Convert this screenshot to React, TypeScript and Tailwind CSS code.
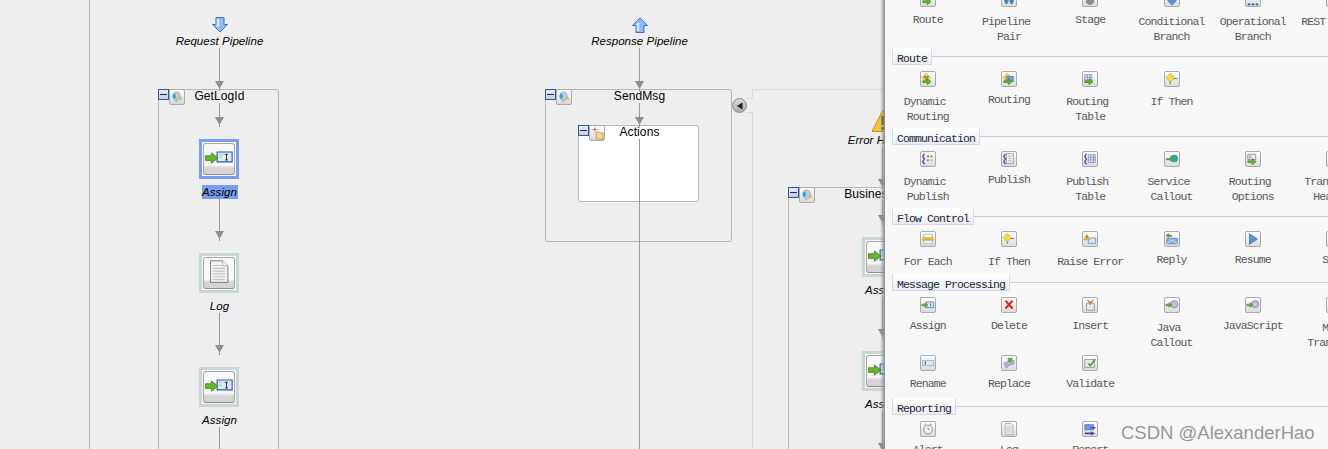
import type { ReactNode } from "react";

// ---- small pieces shared by the palette icons ----

const GreenArrow = () => (
  <path d="M2 10h5V7.5l4.5 3.5L7 14.5V12H2z" fill="#62b32f" stroke="#3f7d1e" strokeWidth="0.7" />
);
const Diamond = () => (
  <path d="M6 1.5 11 6.5 6 11.5 1 6.5z" fill="#f7d84a" stroke="#c9a227" strokeWidth="0.7" />
);
const PurpleZig = () => (
  <path d="M4 2 2 5l2 3-2 3 2 3" fill="none" stroke="#6a4aa8" strokeWidth="1.6" />
);
const Grid = ({ x = 6 }: { x?: number }) => (
  <path
    d={`M${x} 3h8v9h-8zM${x} 6h8M${x} 9h8M${x + 3} 3v9M${x + 6} 3v9`}
    fill="#eef2fa"
    stroke="#5a6ea8"
    strokeWidth="0.7"
  />
);
const Gear = () => (
  <>
    <circle cx="10.5" cy="7" r="4" fill="#cfc6e6" stroke="#7a66ac" strokeWidth="0.9" />
    <circle cx="10.5" cy="7" r="1.4" fill="#fff" stroke="#7a66ac" strokeWidth="0.6" />
  </>
);

const ICONS: Record<string, ReactNode> = {
  route: <GreenArrow />,
  pair: <path d="M3 6h4v5l-2 3-2-3zM9 6h4v5l-2 3-2-3z" fill="#4d82cf" stroke="#2c5aa0" strokeWidth="0.6" />,
  stage: <path d="M4 8h8v4l-2 2H6l-2-2z" fill="#8d8d8d" stroke="#666" strokeWidth="0.6" />,
  cond: <path d="M8 15 3 10l5-5 5 5z" fill="#5b8fdc" stroke="#2c5aa0" strokeWidth="0.6" />,
  oper: <path d="M2 13h3v2H2zM6.5 13h3v2h-3zM11 13h3v2h-3z" fill="#2c5aa0" />,
  rest: <path d="M4 9h8v5H4z" fill="#999" />,
  dynRoute: (
    <>
      <Diamond />
      <circle cx="4.5" cy="5.5" r="1.3" fill="#d64a2f" />
      <circle cx="7.5" cy="5.5" r="1.3" fill="#4d7fd0" />
      <circle cx="6" cy="8" r="1.3" fill="#58a030" />
      <GreenArrow />
    </>
  ),
  routing: (
    <>
      <Diamond />
      <path d="M5 5h8v6H5z" fill="#6d9be0" stroke="#3a62a8" strokeWidth="0.6" />
      <GreenArrow />
    </>
  ),
  routeTable: (
    <>
      <Grid x={2} />
      <GreenArrow />
    </>
  ),
  ifThen: (
    <>
      <path d="M6 7.5v6M6 7.5h8" stroke="#4d72b8" strokeWidth="1.1" />
      <Diamond />
    </>
  ),
  dynPub: (
    <>
      <PurpleZig />
      <circle cx="8" cy="5" r="1.2" fill="#d64a2f" />
      <circle cx="12" cy="5" r="1.2" fill="#58a030" />
      <circle cx="8" cy="9.5" r="1.2" fill="#4d7fd0" />
      <circle cx="12" cy="9.5" r="1.2" fill="#e0b030" />
    </>
  ),
  publish: (
    <>
      <path d="M5 2h8v11H5z" fill="#f1f1f6" stroke="#777" strokeWidth="0.7" />
      <path d="M7 5h4M7 7.5h4M7 10h4" stroke="#999" strokeWidth="0.7" />
      <PurpleZig />
    </>
  ),
  pubTable: (
    <>
      <Grid />
      <PurpleZig />
    </>
  ),
  callout: (
    <>
      <circle cx="10.5" cy="7.5" r="4" fill="#38a6a6" stroke="#1f7a84" strokeWidth="0.6" />
      <path d="M1.5 7.5h4.5V5.5l3 2.5-3 2.5V9H1.5z" fill="#62b32f" stroke="#3f7d1e" strokeWidth="0.5" />
    </>
  ),
  options: (
    <>
      <path d="M2 2.5h9v6H2z" fill="#eee" stroke="#666" strokeWidth="0.7" />
      <path d="M3.5 4.5h2M3.5 6.5h2" stroke="#555" strokeWidth="0.8" />
      <GreenArrow />
    </>
  ),
  transport: <path d="M3 3h10v10H3z" fill="#ddd" stroke="#888" strokeWidth="0.6" />,
  forEach: (
    <>
      <path d="M3 2.5h10v11H3z" fill="#f4f4f4" stroke="#999" strokeWidth="0.7" />
      <path d="M2 6.5h12v3H2z" fill="#e8b83a" stroke="#b08820" strokeWidth="0.5" />
    </>
  ),
  raise: (
    <>
      <path d="M6 7h8.5v6H6z" fill="#dbe8f5" stroke="#3a6ea8" strokeWidth="0.7" />
      <path d="M4.5 2.5 8 9H1z" fill="#f2c530" stroke="#a88418" strokeWidth="0.5" />
      <path d="M4.5 4.5v2.5" stroke="#222" strokeWidth="0.9" />
    </>
  ),
  reply: (
    <>
      <path d="M2 7h12v6.5H2z" fill="#8db2e8" stroke="#4a72b4" strokeWidth="0.7" />
      <path d="M2 13.5 8 9l6 4.5" fill="none" stroke="#e4eefb" strokeWidth="0.8" />
      <path d="M7.5 3.5H4V1.8L1 4l3 2.2V5h3.5z" fill="#62b32f" stroke="#3f7d1e" strokeWidth="0.5" />
    </>
  ),
  resume: <path d="M4 2l9 6-9 6z" fill="#5d8fe0" stroke="#2c5aa0" strokeWidth="0.7" />,
  skip: <path d="M3 4l5 4-5 4zM8 4l5 4-5 4z" fill="#aaa" stroke="#777" strokeWidth="0.5" />,
  assign: (
    <>
      <path d="M6 4.5h8.5v6.5H6z" fill="#dbe8f5" stroke="#2c68a8" strokeWidth="0.8" />
      <path d="M11 6v3.5" stroke="#222" strokeWidth="0.7" />
      <path d="M1 7h3.5V5.2L8 8l-3.5 2.8V9H1z" fill="#62b32f" stroke="#3f7d1e" strokeWidth="0.5" />
    </>
  ),
  del: <path d="M4 3l8 9M12 3l-8 9" stroke="#d8261c" strokeWidth="2.4" />,
  insert: (
    <>
      <path d="M4 6h9v8H4z" fill="#e8e8f2" stroke="#777" strokeWidth="0.7" />
      <path d="M5 2l3.5 2.5L12 2l-3.5 6z" fill="#e08a3a" stroke="#a85f1c" strokeWidth="0.5" />
    </>
  ),
  java: (
    <>
      <Gear />
      <path d="M1 7h3.5V5.2L8 8l-3.5 2.8V9H1z" fill="#62b32f" stroke="#3f7d1e" strokeWidth="0.5" />
    </>
  ),
  mfl: <path d="M3 3h10v10H3z" fill="#e4e0f0" stroke="#8a80b0" strokeWidth="0.6" />,
  rename: (
    <>
      <path d="M1.5 5h13v6h-13z" fill="#dbe8f5" stroke="#7d8fae" strokeWidth="0.7" />
      <path d="M5 6v4" stroke="#222" strokeWidth="0.8" />
    </>
  ),
  replace: (
    <>
      <path d="M2 8l6-2 6-1v4l-6 2-3 3z" fill="#b4aed2" stroke="#7a70a4" strokeWidth="0.5" />
      <path d="M12 2l-1.5 5-4-1.5 1.8-1-1.8-1.5 2.5-1 1 1z" fill="#62b32f" stroke="#3f7d1e" strokeWidth="0.5" />
    </>
  ),
  validate: (
    <>
      <path d="M2 4h11v9H2z" fill="#e7e7ee" stroke="#777" strokeWidth="0.7" />
      <path d="M6 8.5l2.5 2.5L14 3.5" fill="none" stroke="#4e9a25" strokeWidth="1.8" />
    </>
  ),
  alert: (
    <>
      <circle cx="8" cy="8.5" r="5" fill="#f4f4fa" stroke="#6d7ea8" strokeWidth="1" />
      <path d="M8 5.5v3h2.5" fill="none" stroke="#6d7ea8" strokeWidth="0.8" />
      <path d="M3.5 3.5 5.5 2M12.5 3.5 10.5 2" stroke="#e0a030" strokeWidth="1.2" />
    </>
  ),
  log: (
    <>
      <path d="M3.5 1.5h6.5l2.5 2.5v10.5h-9z" fill="#eee" stroke="#888" strokeWidth="0.7" />
      <path d="M5 5.5h6M5 7.5h6M5 9.5h6M5 11.5h6" stroke="#bbb" strokeWidth="0.8" />
    </>
  ),
  report: (
    <>
      <path d="M2 3h10v6H2z" fill="#6d9be0" stroke="#3a62a8" strokeWidth="0.7" />
      <path d="M2 12h7V10.5l5 2.5-5 2.5V14H2zM8 6h4V5l3 1.5L12 8V7H8z" fill="#5c3f9c" />
    </>
  ),
};

// ---- palette data ----

type Item = { icon: string; lines: string[]; lo?: boolean };
type Row = { h: string; items: Item[] };
type Section = { title?: string; rows: Row[] };

const SECTIONS: Section[] = [
  {
    rows: [
      {
        h: "h-[57px]",
        items: [
          { icon: "route", lines: ["Route"] },
          { icon: "pair", lines: ["Pipeline ", "Pair"], lo: true },
          { icon: "stage", lines: ["Stage"] },
          { icon: "cond", lines: ["Conditional", "Branch"], lo: true },
          { icon: "oper", lines: ["Operational", "Branch"], lo: true },
          { icon: "rest", lines: ["REST Branch"], lo: true },
        ],
      },
    ],
  },
  {
    title: "Route",
    rows: [
      {
        h: "h-[57px]",
        items: [
          { icon: "dynRoute", lines: ["Dynamic ", "Routing"], lo: true },
          { icon: "routing", lines: ["Routing"] },
          { icon: "routeTable", lines: ["Routing ", "Table"], lo: true },
          { icon: "ifThen", lines: ["If Then"], lo: true },
        ],
      },
    ],
  },
  {
    title: "Communication",
    rows: [
      {
        h: "h-[57px]",
        items: [
          { icon: "dynPub", lines: ["Dynamic ", "Publish"], lo: true },
          { icon: "publish", lines: ["Publish"] },
          { icon: "pubTable", lines: ["Publish ", "Table"], lo: true },
          { icon: "callout", lines: ["Service ", "Callout"], lo: true },
          { icon: "options", lines: ["Routing ", "Options"], lo: true },
          { icon: "transport", lines: ["Transport ", "Headers"], lo: true },
        ],
      },
    ],
  },
  {
    title: "Flow Control",
    rows: [
      {
        h: "h-[43px]",
        items: [
          { icon: "forEach", lines: ["For Each"], lo: true },
          { icon: "ifThen", lines: ["If Then"], lo: true },
          { icon: "raise", lines: ["Raise Error"], lo: true },
          { icon: "reply", lines: ["Reply"] },
          { icon: "resume", lines: ["Resume"] },
          { icon: "skip", lines: ["Skip"] },
        ],
      },
    ],
  },
  {
    title: "Message Processing",
    rows: [
      {
        h: "h-[58px]",
        items: [
          { icon: "assign", lines: ["Assign"] },
          { icon: "del", lines: ["Delete"] },
          { icon: "insert", lines: ["Insert"] },
          { icon: "java", lines: ["Java ", "Callout"], lo: true },
          { icon: "java", lines: ["JavaScript"] },
          { icon: "mfl", lines: ["MFL ", "Transform"], lo: true },
        ],
      },
      {
        h: "h-[43px]",
        items: [
          { icon: "rename", lines: ["Rename"] },
          { icon: "replace", lines: ["Replace"] },
          { icon: "validate", lines: ["Validate"] },
        ],
      },
    ],
  },
  {
    title: "Reporting",
    rows: [
      {
        h: "h-[43px]",
        items: [
          { icon: "alert", lines: ["Alert"] },
          { icon: "log", lines: ["Log"] },
          { icon: "report", lines: ["Report"] },
        ],
      },
    ],
  },
];

function PaletteItem({ item }: { item: Item }) {
  return (
    <div className="flex flex-col items-center">
      <div className="w-4 h-4 shrink-0 rounded-[2px] border border-[#aaaaaa] bg-linear-to-b from-white to-[#dcdcdc]">
        <svg viewBox="0 0 16 16" className="w-[14px] h-[14px] block">
          {ICONS[item.icon]}
        </svg>
      </div>
      <div className={`${item.lo ? "mt-[7px]" : "mt-[5px]"} text-center`}>
        {item.lines.map((line) => (
          <div key={line} className="whitespace-pre leading-[15px]">
            {line}
          </div>
        ))}
      </div>
    </div>
  );
}

function Palette() {
  return (
    <div className="flex-1 h-full overflow-hidden bg-[#f7f7f7] font-['Liberation_Mono'] text-[11.5px] tracking-[-0.9px] text-[#5b5660]">
      <div className="-mt-[9px]">
        {SECTIONS.map((s, i) => (
          <section key={i}>
            {s.title && (
              <div className="h-[23px] flex items-start pl-[7px]">
                <div className="h-[17px] px-[4px] pt-[2px] leading-[15px] text-[#1c2740] border border-t-white border-[#d3dae8] bg-linear-to-b from-white to-[#eaedf3]">
                  {s.title}
                </div>
                <div className="flex-1 h-px mt-[8px] bg-[#c5cede]" />
              </div>
            )}
            {s.rows.map((r, j) => (
              <div key={j} className={`${r.h} pl-[2px] grid grid-cols-[repeat(6,81.3px)] w-max`}>
                {r.items.map((it) => (
                  <PaletteItem key={it.lines.join("")} item={it} />
                ))}
              </div>
            ))}
          </section>
        ))}
      </div>
    </div>
  );
}

// ---- diagram pieces ----

function Connector({ line }: { line: string }) {
  return (
    <div className="relative z-10 flex flex-col items-center shrink-0">
      <div className={`w-px bg-[#999999] ${line}`} />
      <svg viewBox="0 0 9 10" className="block w-[9px] h-[10px]">
        <path d="M0 0h9L4.5 8z" fill="#8e8e8e" />
        <path d="M4.5 8v2" stroke="#8e8e8e" />
      </svg>
    </div>
  );
}

function Text({ italic, className = "", children }: { italic?: boolean; className?: string; children: ReactNode }) {
  return (
    <div
      className={`shrink-0 whitespace-nowrap leading-[14px] text-black ${italic ? "italic text-[11.5px] tracking-[0.05px]" : "text-[12px] tracking-[0.1px]"} ${className}`}
    >
      {children}
    </div>
  );
}

const StageGlyph = () => (
  <>
    <path d="M11 5l3.5 6H9z" fill="#eebc3a" />
    <ellipse cx="7.5" cy="7" rx="4" ry="5" fill="#c3cad2" stroke="#8a929c" strokeWidth="0.6" />
    <ellipse cx="4.8" cy="7" rx="1.8" ry="3" fill="#26a8d8" />
    <path d="M7 12v2" stroke="#888" />
  </>
);

const ActionsGlyph = () => (
  <>
    <path d="M2 4h7M5.5 1v7" stroke="#b8b8b8" />
    <circle cx="5.5" cy="4" r="1.2" fill="#d8332a" />
    <path d="M7 7h3l1 1h4v7H7z" fill="#f4d488" stroke="#c08a24" strokeWidth="0.8" />
  </>
);

// collapsible container: the header buttons lie over its top left corner
function Stage({
  title,
  glyph,
  className,
  children,
}: {
  title: string;
  glyph: ReactNode;
  className: string;
  children: ReactNode;
}) {
  return (
    <div className={`relative shrink-0 flex flex-col items-center pl-[2px] border border-[#b8b8b8] ${className}`}>
      <div className="absolute -left-px -top-px flex">
        <div className="w-[11px] h-[11px] border border-[#34558f] bg-linear-to-b from-[#e8eef8] to-[#bfcde6] flex items-center justify-center">
          <div className="w-[7px] h-px bg-[#1a2c55]" />
        </div>
        <div className="w-4 h-4 rounded-[2px] border border-[#aaaaaa] bg-linear-to-b from-white to-[#d8d8d8]">
          <svg viewBox="0 0 16 16" className="w-[14px] h-[14px] block">
            {glyph}
          </svg>
        </div>
      </div>
      <Text className="-mt-px">{title}</Text>
      {children}
    </div>
  );
}

function AssignGlyph() {
  return (
    <svg viewBox="0 0 32 32" className="w-full h-full block">
      <path d="M14 8.5h16V19H14z" fill="#dce8f4" stroke="#1c60a8" strokeWidth="1.2" />
      <path d="M16 11h3M20.5 11h2M16 14h3" stroke="#a9bcd0" strokeWidth="1" />
      <path d="M22.5 11h3M24 11v6M22.5 17h3" stroke="#111" strokeWidth="0.9" fill="none" />
      <path d="M1.5 12.5h6.5V9.5l7 5.5-7 5.5V17.5H1.5z" fill="#66b52f" stroke="#3c7a1c" strokeWidth="0.8" />
    </svg>
  );
}

function LogGlyph() {
  return (
    <svg viewBox="0 0 32 32" className="w-full h-full block">
      <path d="M7 3h13l5.5 5.5V26H7z" fill="#f2f2f2" stroke="#777" strokeWidth="1" />
      <path d="M20 3v5.5h5.5" fill="#fff" stroke="#999" strokeWidth="0.8" />
      <path d="M9.5 8h9M9.5 11h13M9.5 14h13M9.5 17h13M9.5 20h13M9.5 23h13" stroke="#c2c2c2" strokeWidth="1.3" />
    </svg>
  );
}

// action node, its caption and the connector that leaves it
function Action({ label, log, selected, line }: { label: string; log?: boolean; selected?: boolean; line: string }) {
  return (
    <>
      <div className={`shrink-0 mt-3 -ml-px w-10 h-10 p-[3px] ${selected ? "bg-[#7a9eee]" : "bg-[#c8d7d5]"}`}>
        <div className="w-full h-full bg-[#f6f6f6] p-px">
          <div className="w-full h-full rounded-[3px] border border-[#a8a8a8] border-b-[#8e8e8e] bg-linear-to-b from-[#f8f8f8] from-70% to-[#d4d4d4] to-80%">
            {log ? <LogGlyph /> : <AssignGlyph />}
          </div>
        </div>
      </div>
      <Text italic className={`mt-[6px] ${selected ? "w-[36px] text-center bg-[#7a9eee]" : ""}`}>
        {label}
      </Text>
      <Connector line={line} />
    </>
  );
}

function Lead({ icon, label, line }: { icon: ReactNode; label: string; line: string }) {
  return (
    <div className="flex flex-col items-center pl-[2px] -mb-[2px]">
      {icon}
      <Text italic>{label}</Text>
      <Connector line={line} />
    </div>
  );
}

const DownArrow = () => (
  <svg viewBox="0 0 16 16" className="block w-4 h-4 mb-px">
    <path d="M4 0.5h8v7h3.5L8 15 0.5 7.5H4z" fill="#8fbcf5" stroke="#3f6fc8" />
    <path d="M6 2v8" stroke="#d8e8fc" strokeWidth="2.5" />
  </svg>
);

const UpArrow = () => (
  <svg viewBox="0 0 16 16" className="block w-4 h-4 mb-px">
    <path d="M4 15.5h8v-7h3.5L8 1 0.5 8.5H4z" fill="#8fbcf5" stroke="#3f6fc8" />
    <path d="M6 14V6" stroke="#d8e8fc" strokeWidth="2.5" />
  </svg>
);

const Warning = () => (
  <svg viewBox="0 0 24 24" className="block w-6 h-6">
    <path d="M12 1 23 22.5H1z" fill="#f3c73a" stroke="#b8901e" strokeLinejoin="round" />
    <path d="M12 7v9M12 18v3" stroke="#444" strokeWidth="3" />
  </svg>
);

function Canvas() {
  return (
    <div className="relative w-[885px] h-full overflow-hidden bg-[#eeeeee] font-['Liberation_Sans']">
      <div className="absolute left-[89px] top-0 bottom-0 w-px bg-[#b8b8b8]" />

      {/* Request pipeline */}
      <div className="absolute left-[158px] top-[17px] w-[121px] flex flex-col">
        <Lead icon={<DownArrow />} label="Request Pipeline" line="h-[33px]" />
        <Stage title="GetLogId" glyph={<StageGlyph />} className="rounded-tr-[3px] h-[400px]">
          <Connector line="h-[14px]" />
          <Action selected label="Assign" line="h-[32px]" />
          <Action log label="Log" line="h-[32px]" />
          <Action label="Assign" line="h-[32px]" />
        </Stage>
      </div>

      {/* Response pipeline */}
      <div className="absolute left-[545px] top-[17px] w-[187px] flex flex-col">
        <Lead icon={<UpArrow />} label="Response Pipeline" line="h-[33px]" />
        <Stage title="SendMsg" glyph={<StageGlyph />} className="rounded-[3px] h-[153px]">
          <div className="-mb-[2px]">
            <Connector line="h-[14px]" />
          </div>
          <Stage title="Actions" glyph={<ActionsGlyph />} className="-ml-[2px] w-[121px] h-[77px] bg-white rounded-[3px]">
            <div className="w-px h-[310px] shrink-0 bg-[#999999]" />
          </Stage>
        </Stage>
      </div>

      {/* Error handler, the panel hides most of it */}
      <div className="absolute left-[752px] top-[89px] right-0 h-[9px] border-l border-t border-[#d9d9d9]" />
      <div className="absolute left-[746px] top-[98px] w-[6px] h-px bg-[#d9d9d9]" />
      <div className="absolute left-[746px] top-[112px] bottom-0 w-[7px] border-t border-r border-[#d9d9d9]" />
      <div className="absolute left-[732px] top-[98px] w-[15px] h-[15px] rounded-full border border-[#8a8a8a] bg-linear-to-b from-[#d8d8d8] to-[#aaaaaa] flex items-center justify-center">
        <svg viewBox="0 0 8 8" className="w-2 h-2">
          <path d="M6.5 0.5v7L1 4z" fill="#222" />
        </svg>
      </div>
      <div className="absolute left-[788px] top-[109px] w-[187px] flex flex-col">
        <Lead icon={<Warning />} label="Error Handler" line="h-[32px]" />
        <Stage title="BusinessError" glyph={<StageGlyph />} className="h-[400px]">
          <Connector line="h-[14px]" />
          <Action label="Assign" line="h-[32px]" />
          <Action label="Assign" line="h-[32px]" />
        </Stage>
      </div>

      {/* panel shadow */}
      <div className="absolute right-0 top-0 bottom-0 w-[5px] z-20 bg-linear-to-r from-transparent to-[#8c8c8c]" />
    </div>
  );
}

export default function App() {
  return (
    <div className="relative flex w-[1328px] h-[449px] overflow-hidden">
      <Canvas />
      <Palette />
      <div className="absolute left-[1121px] top-[421px] font-['Liberation_Sans'] text-[18.5px] leading-[24px] text-[#989898] whitespace-nowrap">
        CSDN @AlexanderHao
      </div>
    </div>
  );
}
